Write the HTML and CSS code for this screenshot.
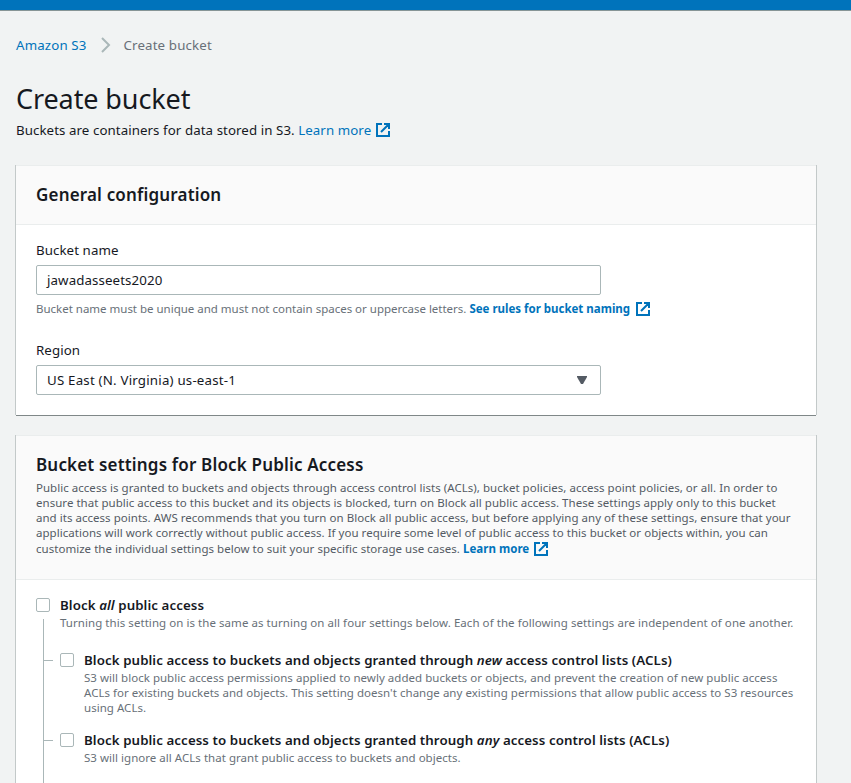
FILE: index.html
```html
<!DOCTYPE html>
<html lang="en">
<head>
<meta charset="utf-8">
<title>Create bucket</title>
<link rel="stylesheet" href="styles.css">
</head>
<body>
<svg class="defs" width="0" height="0" aria-hidden="true">
  <symbol id="external" viewBox="0 0 14 14">
    <path d="M6 1H1v12h12V8M8 1h5v5M13 1L5 9" fill="none" stroke="currentColor" stroke-width="2"/>
  </symbol>
</svg>
<div class="topbar"></div>
<main class="page">
  <nav class="crumbs">
    <a class="link">Amazon S3</a>
    <svg class="chevron" viewBox="0 0 10 16"><path d="M1 1l7 7-7 7" fill="none" stroke="#aab7b8" stroke-width="2"/></svg>
    <span>Create bucket</span>
  </nav>
  <h1 class="title">Create bucket</h1>
  <p class="intro">Buckets are containers for data stored in S3. <a class="link">Learn more<svg class="ext"><use href="#external"/></svg></a></p>

  <section class="panel general">
    <header class="panel-head"><h2 class="heading">General configuration</h2></header>
    <div class="panel-body">
      <label class="label">Bucket name</label>
      <div class="field"><span class="name-value">jawadasseets2020</span></div>
      <p class="hint">Bucket name must be unique and must not contain spaces or uppercase letters. <a class="link strong">See rules for bucket naming<svg class="ext"><use href="#external"/></svg></a></p>
      <label class="label region">Region</label>
      <div class="field"><span class="region-value">US East (N. Virginia) us-east-1</span><svg class="caret" viewBox="0 0 10 8"><path d="M0 0h10v1L6 8H4L0 1z" fill="#545b64"/></svg></div>
    </div>
  </section>

  <section class="panel access">
    <header class="panel-head">
      <h2 class="heading">Bucket settings for Block Public Access</h2>
      <p class="small desc">Public access is granted to buckets and objects through access control lists (ACLs), bucket policies, access point policies, or all. In order to<br>ensure that public access to this bucket and its objects is blocked, turn on Block all public access. These settings apply only to this bucket<br>and its access points. AWS recommends that you turn on Block all public access, but before applying any of these settings, ensure that your<br>applications will work correctly without public access. If you require some level of public access to this bucket or objects within, you can</p>
      <p class="small desc last">customize the individual settings below to suit your specific storage use cases. <a class="link strong">Learn more<svg class="ext"><use href="#external"/></svg></a></p>
    </header>
    <div class="options">
      <div class="option">
        <span class="box"></span>
        <div><h3 class="option-title">Block <i>all</i> public access</h3>
        <p class="small muted">Turning this setting on is the same as turning on all four settings below. Each of the following settings are independent of one another.</p></div>
      </div>
      <div class="tree">
        <div class="option child">
          <span class="box"></span>
          <div><h3 class="option-title">Block public access to buckets and objects granted through <i>new</i> access control lists (ACLs)</h3>
          <p class="small muted">S3 will block public access permissions applied to newly added buckets or objects, and prevent the creation of new public access<br>ACLs for existing buckets and objects. This setting doesn't change any existing permissions that allow public access to S3 resources<br>using ACLs.</p></div>
        </div>
        <div class="option child">
          <span class="box"></span>
          <div><h3 class="option-title">Block public access to buckets and objects granted through <i>any</i> access control lists (ACLs)</h3>
          <p class="small muted">S3 will ignore all ACLs that grant public access to buckets and objects.</p></div>
        </div>
      </div>
    </div>
  </section>
</main>
</body>
</html>
```
FILE: styles.css
```css
* { box-sizing: border-box; }
html, body { height: 100%; overflow: hidden; }
body { margin: 0; background: #f1f3f3; color: #16191f; font: 13.3px/20px "Noto Sans", "Open Sans", sans-serif; letter-spacing: .07px; white-space: nowrap; }
h1, h2, h3, p { margin: 0; }
.defs { position: absolute; }
.topbar { height: 11px; background: #0073bb; border-bottom: 1px solid #879596; }
.page { padding: 24px 35px 0 16px; }
.link { color: #0073bb; }
.strong { font-weight: 700; }
.ext { width: 14px; height: 14px; margin-left: 5px; vertical-align: -2px; }
.hint .ext { margin-left: 6px; }
.hint .ext, .last .ext { vertical-align: -3px; }
.crumbs { display: flex; align-items: center; height: 20px; color: #687078; letter-spacing: .14px; }
.chevron { width: 10px; height: 16px; margin: 0 13px 0 14px; }
.title { margin-top: 26px; font-size: 27px; line-height: 36px; font-weight: 400; letter-spacing: -.1px; }
.intro { margin-top: 3px; }
.panel { width: 800px; background: #fff; border-top: 1px solid #eaeded; box-shadow: -1px 0 0 #c3c9c9, 1px 0 0 #c3c9c9, 0 1px 0 #7f8788; }
.panel-head { padding: 19px 20px; background: #fafafa; border-bottom: 1px solid #eaeded; }
.heading { font-size: 17px; line-height: 20px; font-weight: 600; letter-spacing: .17px; }
.general { height: 250px; margin-top: 25px; }
.panel-body { padding: 15px 20px; }
.label { display: block; }
.field { display: flex; align-items: center; justify-content: space-between; width: 565px; height: 30px; margin-top: 5px; padding: 0 13px 0 10px; border: 1px solid #aab7b8; border-radius: 2px; }
.name-value { letter-spacing: .1px; }
.region-value { letter-spacing: .2px; }
.caret { width: 10px; height: 8px; }
.hint { height: 20px; margin-top: 4px; color: #687078; font-size: 11.5px; letter-spacing: -.01px; }
.region { margin-top: 21px; }
.access { height: 348px; margin-top: 20px; }
.small { font-size: 11.5px; line-height: 15px; letter-spacing: .03px; }
.desc { margin-top: 5px; color: #545b64; }
.last { height: 17px; margin: 0; line-height: 17px; }
.access .panel-head { height: 144px; padding-bottom: 0; }
.muted { color: #687078; letter-spacing: .055px; }
.options { padding: 15px 20px 0; }
.option { display: flex; gap: 10px; }
.option-title { font-size: 13.3px; line-height: 20px; font-weight: 600; letter-spacing: .08px; }
.box { flex: none; width: 14px; height: 14px; margin-top: 3px; border: 1px solid #aab7b8; border-radius: 2px; }
.tree { margin: -11px 0 0 7px; height: 164px; padding-top: 31px; border-left: 1px solid #aab7b8; }
.child { margin-bottom: 15px; }
.child:last-child { margin-bottom: 0; }
.child .small { letter-spacing: .03px; }
.child::before { content: ""; width: 9px; height: 1px; margin: 10px -3px 0 0; background: #aab7b8; }
```
